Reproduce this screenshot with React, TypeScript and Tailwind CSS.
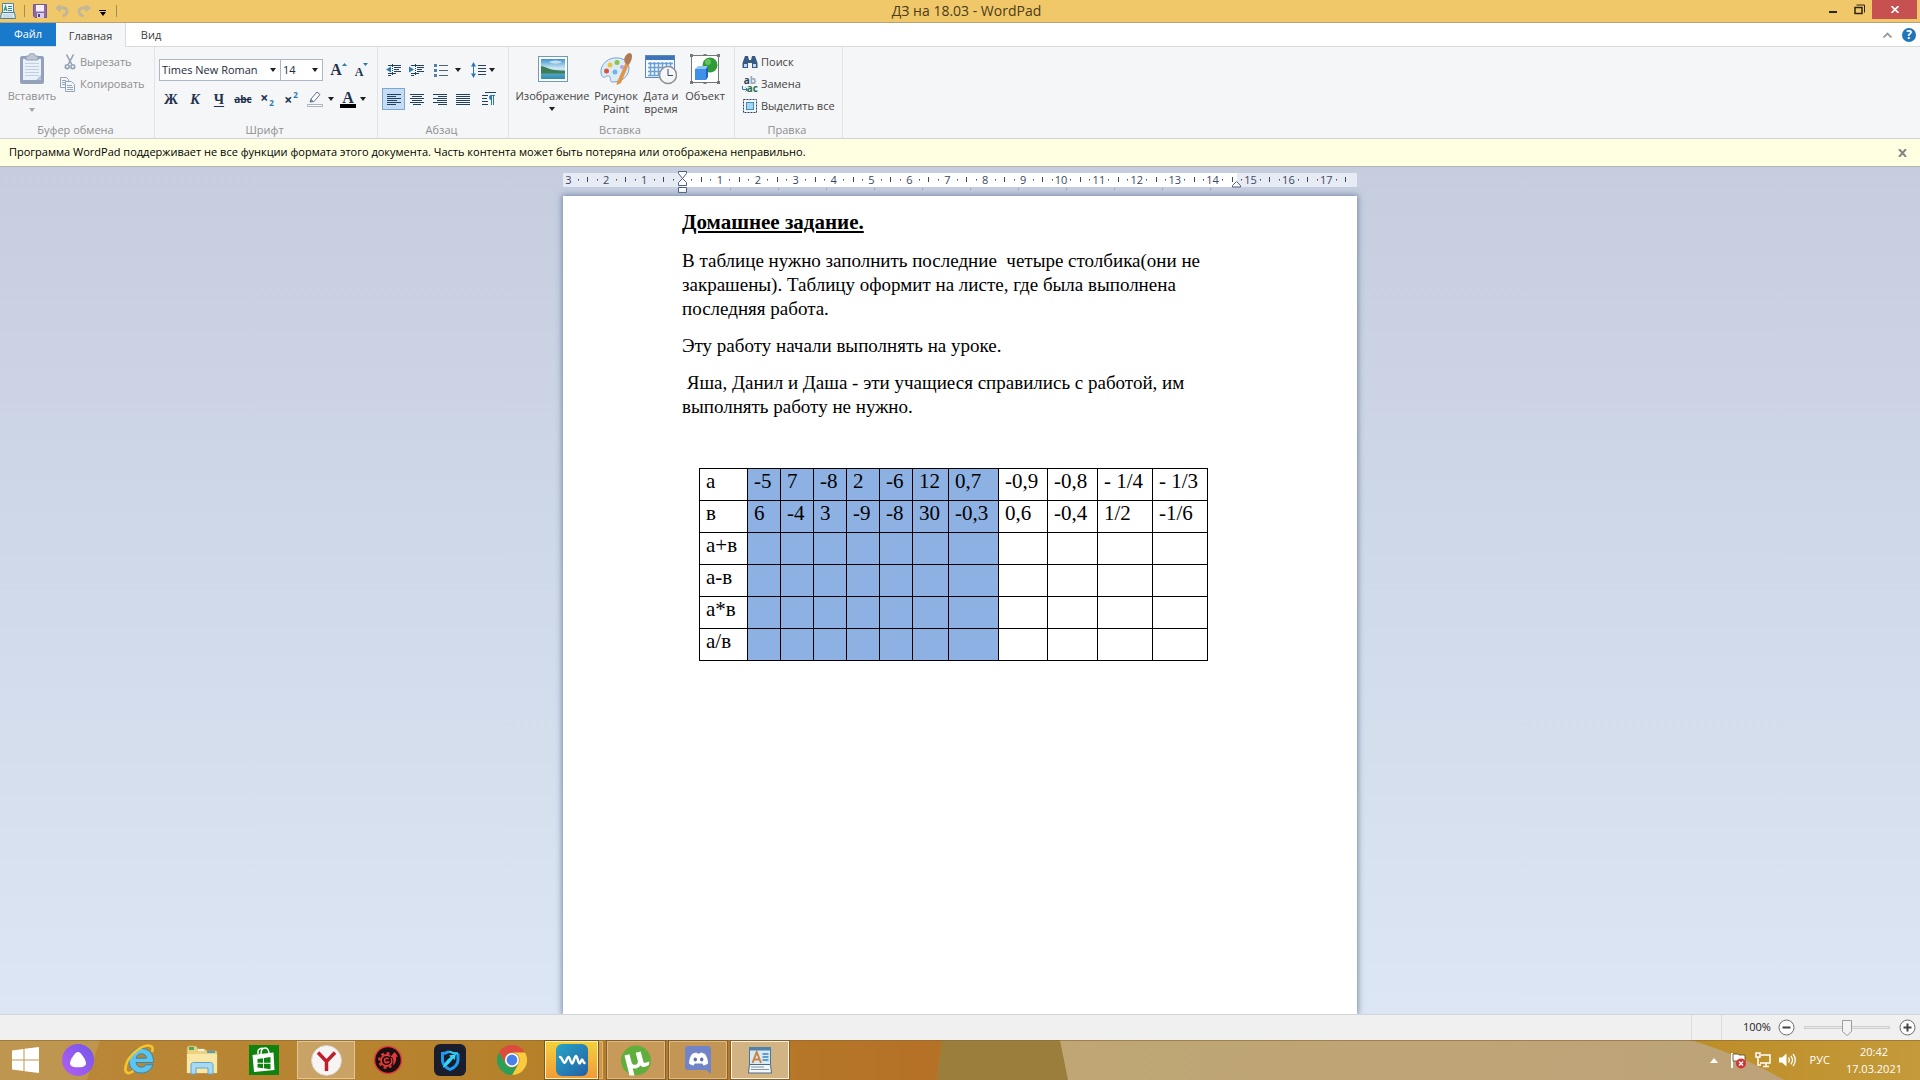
import React from "react";

type Kids = { children?: React.ReactNode };

const Down = ({ className = "" }: { className?: string }) => (
  <svg width="6" height="4" viewBox="0 0 6 4" className={className} aria-hidden="true">
    <path d="M0 0h6L3 4z" fill="currentColor" />
  </svg>
);

/* ---------- title bar ---------- */

const AppIcon = () => (
  <svg width="16" height="16" viewBox="0 0 16 16">
    <path d="M2.500.5h11v9h-11z" fill="#eef6fb" stroke="#4d86a3" />
    <path d="M1.500 9.500h13l1 6H.5z" fill="#dcebf4" stroke="#4d7f99" />
    <path d="M4 8l1.500-5L7 8M4.500 6.500h2" stroke="#3a9a68" strokeWidth="1.200" fill="none" />
    <path d="M8 3.500h4M8 5.500h4M8 7.500h4" stroke="#3f7cb8" />
    <path d="M3 12h10M3 14h10" stroke="#b6ccd9" />
  </svg>
);

const SaveIcon = () => (
  <svg width="14" height="14" viewBox="0 0 14 14">
    <path d="M.5.5h13v13H2l-1.500-1.500z" fill="#8a6aa8" stroke="#74588f" />
    <path d="M3 1h8v6.500H3z" fill="#f6eefa" />
    <path d="M4 9h7v5H4z" fill="#d9cde4" />
    <path d="M5 10h2v3H5z" fill="#5d3f83" />
  </svg>
);

const UndoIcon = ({ flip = false }: { flip?: boolean }) => (
  <svg width="14" height="14" viewBox="0 0 14 14" className={flip ? "-scale-x-100" : ""}>
    <path d="M3 4h5c2.500 0 4 1.200 4 3.200s-1.500 4-4.500 5" fill="none" stroke="#c3b698" strokeWidth="3" />
    <path d="M5.500 0v8.500L0 4z" fill="#c3b698" />
  </svg>
);

const TitleBar = () => (
  <header className="relative flex h-[23px] items-center justify-between border-b border-[#b5a27c] bg-[#f0c869]">
    <div className="flex h-full items-center gap-2">
      <AppIcon />
      <span className="h-3 w-px bg-[#a58c50]" />
      <button aria-label="Сохранить">
        <SaveIcon />
      </button>
      <button aria-label="Отменить">
        <UndoIcon />
      </button>
      <button aria-label="Вернуть">
        <UndoIcon flip />
      </button>
      <button aria-label="Настройка панели" className="mt-1 flex flex-col items-center gap-px">
        <span className="h-px w-[7px] bg-black" />
        <Down className="text-black" />
      </button>
      <span className="ml-[2px] h-3 w-px bg-[#a58c50]" />
    </div>
    <h1 className="absolute left-1/2 -translate-x-1/2 pl-[13px] text-[14px] leading-[22px] text-[#4b3c1c]">ДЗ на 18.03 - WordPad</h1>
    <div className="flex h-full items-start">
      <button aria-label="Свернуть" className="flex h-[19px] w-[26px] items-center justify-center">
        <svg width="8" height="12" viewBox="0 0 8 12">
          <path d="M0 7h8v2H0z" fill="#2d2410" />
        </svg>
      </button>
      <button aria-label="Восстановить" className="flex h-[18px] w-[26px] items-center justify-center">
        <svg width="11" height="11" viewBox="0 0 11 11" fill="none" stroke="#2d2410">
          <path d="M1 3.500h7v6H1z" strokeWidth="1.500" />
          <path d="M2.500 1h8v7.500" />
        </svg>
      </button>
      <button aria-label="Закрыть" className="mr-[3px] flex h-[19px] w-[45px] items-center justify-center bg-[#c75050]">
        <svg width="8" height="7" viewBox="0 0 8 7" stroke="#fff" strokeWidth="1.600">
          <path d="M.5 0l7 7M7.500 0l-7 7" />
        </svg>
      </button>
    </div>
  </header>
);

const Tabs = () => (
  <nav className="flex h-[24px] items-stretch border-b border-[#dadbdc] bg-white text-[11px] text-[#3c3c3c]">
    <button className="w-14 bg-[#1979ca] text-white">Файл</button>
    <button className="-mb-px w-[70px] border-r border-[#dadbdc] bg-[#f5f6f7] pt-[2px]">Главная</button>
    <button className="w-[50px] pt-[2px]">Вид</button>
    <div className="ml-auto flex items-center gap-2 pr-1">
      <button aria-label="Свернуть ленту" className="mr-[2px]">
        <svg width="9" height="6" viewBox="0 0 9 6" fill="none" stroke="#9a9a9a" strokeWidth="1.800">
          <path d="M.5 5.500l4-4 4 4" />
        </svg>
      </button>
      <button aria-label="Справка" className="flex h-[14px] w-[14px] items-center justify-center rounded-full bg-[#1f74ba] text-[12px] font-bold text-white">
        ?
      </button>
    </div>
  </nav>
);

/* ---------- ribbon ---------- */

const Group = ({ label, className, children }: Kids & { label: string; className: string }) => (
  <section className={`flex h-full flex-col border-r border-[#e2e3e4] ${className}`}>
    <div className="flex-1">{children}</div>
    <div className="pr-[3px] text-center leading-[17px] text-[#8e8f91]">{label}</div>
  </section>
);

const PasteIcon = () => (
  <svg width="26" height="32" viewBox="0 0 26 32">
    <rect x="1" y="3" width="24" height="28" rx="2" fill="#93a2b9" />
    <rect x="4" y="6" width="18" height="21" fill="#eaf0f8" />
    <path d="M6 10.500h14M6 13.500h14M6 16.500h14M6 19.500h14M6 22.500h14" stroke="#c2cfe2" />
    <path d="M22 27v-5l-5 5z" fill="#b8c5d8" />
    <path d="M7 3h3c0-2 1-3 3-3s3 1 3 3h3v4H7z" fill="#bcc7d5" stroke="#8593a9" strokeWidth=".8" />
  </svg>
);

const CutIcon = () => (
  <svg width="12" height="16" viewBox="0 0 12 16" fill="none" stroke="#92a2b6" strokeWidth="1.600">
    <path d="M2.500 0.500L7.800 10.500M9.500 .5L4.200 10.500" />
    <circle cx="3.200" cy="12.700" r="1.900" />
    <circle cx="8.800" cy="12.700" r="1.900" />
  </svg>
);

const CopyIcon = () => (
  <svg width="15" height="15" viewBox="0 0 15 15" fill="#f4f7fa" stroke="#94a5ba">
    <path d="M.5.5h6l2 2v8h-8z" />
    <path d="M2 3.500h4M2 5.500h3M2 7.500h3" />
    <path d="M5.500 4.500h6l3 3v7h-9z" />
    <path d="M7 8.500h5M7 10.500h6M7 12.500h6" />
  </svg>
);

const Clipboard = () => (
  <div className="flex gap-1 pl-2 pt-1 text-[#8e8f91]">
    <button className="mt-[2px] flex w-[48px] flex-col items-center">
      <PasteIcon />
      <span className="mt-[3px] leading-4">Вставить</span>
      <Down className="mt-1 text-[#a5a5a5]" />
    </button>
    <div className="flex flex-col">
      <button className="flex h-[22px] items-center">
        <span className="flex w-5 justify-center">
          <CutIcon />
        </span>
        Вырезать
      </button>
      <button className="flex h-[22px] items-center">
        <span className="flex w-5">
          <CopyIcon />
        </span>
        Копировать
      </button>
    </div>
  </div>
);

const Combo = ({ label, value, className }: { label: string; value: string; className: string }) => (
  <label className={`relative flex h-[22px] items-center border border-[#abb6c6] bg-white ${className}`}>
    <select aria-label={label} className="h-full w-full appearance-none bg-transparent pl-[2px] text-[11px] text-[#222b3c] outline-none" defaultValue={value}>
      <option>{value}</option>
    </select>
    <Down className="pointer-events-none absolute right-1 text-[#1e1e1e]" />
  </label>
);

const Tool = ({ label, className = "w-[23px]", children }: Kids & { label: string; className?: string }) => (
  <button aria-label={label} className={`flex h-[22px] shrink-0 items-center justify-center font-['Liberation_Serif',serif] text-[#1f3350] ${className}`}>
    {children}
  </button>
);

const FontGroup = () => (
  <div className="flex flex-col gap-[7px] pl-1 pt-[12px]">
    <div className="flex items-center">
      <Combo label="Шрифт" value="Times New Roman" className="w-[122px]" />
      <Combo label="Размер шрифта" value="14" className="-ml-px w-[43px]" />
      <Tool label="Увеличить шрифт" className="ml-1 w-[23px]">
        <span className="text-[16px] font-bold leading-4">A</span>
        <svg width="5" height="3" viewBox="0 0 5 3" className="-mt-3">
          <path d="M0 3L2.500 0 5 3z" fill="#2b7aa8" />
        </svg>
      </Tool>
      <Tool label="Уменьшить шрифт">
        <span className="mt-1 text-[12px] font-bold leading-4">A</span>
        <svg width="5" height="3" viewBox="0 0 5 3" className="-mt-3">
          <path d="M0 0h5L2.500 3z" fill="#2b7aa8" />
        </svg>
      </Tool>
    </div>
    <div className="flex items-center">
      <Tool label="Полужирный" className="w-6 text-[14px] font-bold">Ж</Tool>
      <Tool label="Курсив" className="w-6 text-[14px] font-bold italic">К</Tool>
      <Tool label="Подчеркнутый" className="w-6 text-[14px] font-bold underline underline-offset-2">Ч</Tool>
      <Tool label="Зачеркнутый" className="w-6 font-['Open_Sans',sans-serif] text-[10px] font-bold line-through">abc</Tool>
      <Tool label="Подстрочный знак" className="w-6 gap-px font-['Open_Sans',sans-serif] text-[14px] font-bold">
        <span className="-mt-[3px]">×</span>
        <span className="mt-2 text-[8px] text-[#2b7aa8]">2</span>
      </Tool>
      <Tool label="Надстрочный знак" className="w-6 gap-px font-['Open_Sans',sans-serif] text-[14px] font-bold">
        <span>×</span>
        <span className="-mt-2 text-[8px] text-[#2b7aa8]">2</span>
      </Tool>
      <button aria-label="Цвет выделения" className="ml-1 flex h-[22px] items-center gap-[3px] text-[#1e1e1e]">
        <svg width="18" height="17" viewBox="0 0 18 17">
          <path d="M3 11l1-3 6-7 3 2.500L7 10.500z" fill="#fff" stroke="#5d7089" />
          <path d="M3 11l1-3 3 2.500z" fill="#6d7f96" />
          <path d="M.5 13.500h15v2H.5z" fill="#fff" stroke="#a8b2c0" />
        </svg>
        <Down />
      </button>
      <button aria-label="Цвет текста" className="ml-[6px] flex h-[22px] items-center gap-1 text-[#1e1e1e]">
        <span className="flex w-4 flex-col items-center">
          <span className="font-['Liberation_Serif',serif] text-[16px] font-bold leading-[13px] text-[#1f3350]">A</span>
          <span className="h-1 w-4 bg-black" />
        </span>
        <Down />
      </button>
    </div>
  </div>
);

const Lines = ({ rows }: { rows: [number, number][] }) => (
  <svg width="14" height="13" viewBox="0 0 14 13" stroke="#23405f" strokeWidth="1">
    {rows.map(([a, b], i) => (
      <path key={i} d={`M${a} ${i * 2 + 1.5}H${b}`} />
    ))}
  </svg>
);

const IndentIcon = ({ out = false }: { out?: boolean }) => (
  <svg width="16" height="14" viewBox="0 0 16 14" fill="none">
    <path d="M6.500 1v12" stroke="#23405f" strokeDasharray="1 1" />
    <path d="M2 2.500h13M8 4.500h7M8 6.500h5M8 8.500h7M2 10.500h8M2 12.500h3" stroke="#23405f" />
    {out ? <path d="M5 3.500v6L0 6.500z" fill="#2b7ab5" /> : <path d="M0 3.500v6l5-3z" fill="#2b7ab5" />}
  </svg>
);

const full: [number, number][] = [[0, 14], [0, 14], [0, 14], [0, 14], [0, 14], [0, 14]];
const left: [number, number][] = [[0, 14], [0, 9], [0, 14], [0, 10], [0, 14], [0, 9]];
const center: [number, number][] = [[0, 14], [2, 12], [0, 14], [2, 12], [0, 14], [3, 11]];
const right: [number, number][] = [[0, 14], [5, 14], [0, 14], [4, 14], [0, 14], [5, 14]];

const ParagraphGroup = () => (
  <div className="flex flex-col gap-[7px] pl-1 pt-[12px]">
    <div className="flex items-center">
      <Tool label="Уменьшить отступ">
        <IndentIcon out />
      </Tool>
      <Tool label="Увеличить отступ">
        <IndentIcon />
      </Tool>
      <button aria-label="Маркеры" className="ml-[5px] flex h-[22px] items-center gap-[6px] text-[#1e1e1e]">
        <svg width="16" height="14" viewBox="0 0 16 14">
          <path d="M1 1h3v3H1zM1 6h3v3H1zM1 11h3v3H1z" fill="#4d83a6" />
          <path d="M6 2.500h9M6 7.500h9M6 12.500h9" stroke="#4f6378" />
        </svg>
        <Down />
      </button>
      <button aria-label="Междустрочный интервал" className="ml-[10px] flex h-[22px] items-center gap-[3px] text-[#1e1e1e]">
        <svg width="15" height="16" viewBox="0 0 15 16">
          <path d="M2.500 3v10" stroke="#2b7ab5" />
          <path d="M0 4.500h5L2.500 0zM0 11.500h5L2.500 16z" fill="#2b7ab5" />
          <path d="M7 3.500h8M7 6.500h8M7 9.500h8M7 12.500h8" stroke="#23405f" />
        </svg>
        <Down />
      </button>
    </div>
    <div className="flex items-center">
      <Tool label="По левому краю" className="w-[23px] border border-[#7fa6d0] bg-[#c5dcf5]">
        <Lines rows={left} />
      </Tool>
      <Tool label="По центру">
        <Lines rows={center} />
      </Tool>
      <Tool label="По правому краю">
        <Lines rows={right} />
      </Tool>
      <Tool label="По ширине">
        <Lines rows={full} />
      </Tool>
      <Tool label="Абзац" className="ml-[3px] w-[23px]">
        <svg width="14" height="14" viewBox="0 0 14 14">
          <path d="M3 .5h11M0 3.500h6M0 6.500h5M0 9.500h6M0 12.500h6" stroke="#23405f" />
          <path d="M8 3h5v1h-1v9h-1V4h-1v9H9V8C6.500 8 6.500 3 9 3z" fill="#2b7ab5" />
        </svg>
      </Tool>
    </div>
  </div>
);

const ImageIcon = () => (
  <svg width="30" height="28" viewBox="0 0 30 28">
    <defs>
      <linearGradient id="sky" x1="0" y1="0" x2="0" y2="1">
        <stop offset="0" stopColor="#3f93cf" />
        <stop offset=".5" stopColor="#d7eef7" />
        <stop offset=".6" stopColor="#6aaec4" />
        <stop offset="1" stopColor="#2e8fb4" />
      </linearGradient>
    </defs>
    <rect x=".5" y="1.500" width="29" height="25" fill="#fff" stroke="#6d9cb5" />
    <rect x="3" y="4" width="24" height="20" fill="url(#sky)" />
    <path d="M3 11c6 1 10 5 24 5v2.500H3z" fill="#3d7d55" />
    <path d="M11 7c4-2 9-2 13 0-4 2-8 2-13 0z" fill="#fff" opacity=".6" />
  </svg>
);

const PaintIcon = () => (
  <svg width="32" height="32" viewBox="0 0 32 32">
    <path d="M14 5C6 6 0 13 1 20c.5 3 2 5 4 4s4-2 5 0-1 5 3 5c8 0 16-5 16-14 0-7-7-11-15-10z" fill="#dcebf8" stroke="#7aa5cc" />
    <circle cx="10" cy="12" r="2.500" fill="#e8c445" />
    <circle cx="17" cy="9.500" r="2.500" fill="#8bc34a" />
    <circle cx="6.500" cy="18" r="2.500" fill="#d9543f" />
    <circle cx="15" cy="19" r="2.500" fill="#6fb6e8" />
    <circle cx="22" cy="14" r="2" fill="#b9a2d8" />
    <path d="M26 9l3 2-8 19-4 2c-1-1 0-3 .500-4z" fill="#e0964a" />
    <path d="M25 10c-2-4 0-8 4-10 2 0 3 1 3 3 0 3-1 6-3.500 9z" fill="#b07a55" />
  </svg>
);

const DateIcon = () => (
  <svg width="32" height="32" viewBox="0 0 32 32">
    <rect x=".5" y="2.500" width="29" height="22" fill="#f5faff" stroke="#5b89bd" />
    <path d="M1 3h28.500v4H1z" fill="#3f74b8" />
    <path d="M3 10.500h25M3 14.500h25M3 18.500h20M3 22.500h18M5.500 9v14M9.500 9v14M13.500 9v14M17.500 9v14M21.500 9v8M25.500 9v8" stroke="#6d9fd6" strokeWidth="1.500" />
    <circle cx="23" cy="22" r="8.500" fill="#f4f6f8" stroke="#8d9299" strokeWidth="1.500" />
    <path d="M23 16v6.500h5" fill="none" stroke="#3b4b5c" />
  </svg>
);

const ObjectIcon = () => (
  <svg width="30" height="30" viewBox="0 0 30 30">
    <rect x="1.500" y="1.500" width="27" height="27" fill="#fff" stroke="#777" strokeWidth="1" />
    <path d="M0 0h3v3H0zM27 0h3v3h-3zM0 27h3v3H0zM27 27h3v3h-3zM13.500 0h3v2h-3zM13.500 28h3v2h-3z" fill="#777" />
    <circle cx="20" cy="11" r="7.500" fill="#2f9a38" />
    <circle cx="18" cy="8" r="3" fill="#7fd06f" opacity=".7" />
    <path d="M5 15l3-3h10l-2 3z" fill="#8ec5fa" />
    <path d="M5 15h11v11H5z" fill="#3f90e8" />
    <path d="M16 15l2-3v11l-2 3z" fill="#1f63bd" />
  </svg>
);

const Big = ({ icon, className, children }: Kids & { icon: React.ReactNode; className: string }) => (
  <button className={`flex flex-col items-center text-[#444] ${className}`}>
    <span className="flex h-8 items-center">{icon}</span>
    <span className="mt-1 whitespace-nowrap leading-[13px]">{children}</span>
  </button>
);

const InsertGroup = () => (
  <div className="flex items-start pl-[5px] pt-[6px]">
    <Big icon={<ImageIcon />} className="w-[77px]">
      Изображение
      <Down className="mx-auto mt-[5px] text-[#1e1e1e]" />
    </Big>
    <Big icon={<PaintIcon />} className="w-[50px]">
      Рисунок
      <br />
      Paint
    </Big>
    <Big icon={<DateIcon />} className="w-[40px]">
      Дата и
      <br />
      время
    </Big>
    <Big icon={<ObjectIcon />} className="w-[48px]">
      Объект
    </Big>
  </div>
);

const EditGroup = () => (
  <div className="flex flex-col pl-[7px] pt-1 text-[#444]">
    <button className="flex h-[22px] items-center gap-[3px]">
      <svg width="16" height="14" viewBox="0 0 16 14" fill="#375a85">
        <path d="M3 1h3l1 4h2l1-4h3l2.500 7v5H10V8H6v5H.5V8z" />
        <path d="M2 9h3v3H2zM11 9h3v3h-3z" fill="#c4d6ea" />
      </svg>
      Поиск
    </button>
    <button className="flex h-[22px] items-center gap-[3px]">
      <span className="relative block h-4 w-4 text-[10px] font-bold leading-[8px]">
        <span className="block text-[#27415f]">
          a<span className="text-[#9aa5b2]">b</span>
        </span>
        <span className="block text-right text-[#24704c]">ac</span>
        <svg width="6" height="6" viewBox="0 0 6 6" className="absolute bottom-0 left-0" fill="none" stroke="#2b7ab5">
          <path d="M.5 0v3.500H5M3.500 1.500l2 2-2 2" />
        </svg>
      </span>
      Замена
    </button>
    <button className="flex h-[22px] items-center gap-[3px]">
      <svg width="16" height="15" viewBox="0 0 16 15">
        <rect x="1.500" y=".5" width="13" height="13" fill="none" stroke="#23405f" strokeDasharray="2 1" />
        <rect x="4.500" y="3.500" width="7" height="7" fill="#a6d7f2" stroke="#3c8fc2" />
      </svg>
      Выделить все
    </button>
  </div>
);

const Ribbon = () => (
  <div className="flex h-[92px] border-b border-[#d2d3d4] bg-[#f5f6f7] text-[11px]">
    <Group label="Буфер обмена" className="w-[155px]">
      <Clipboard />
    </Group>
    <Group label="Шрифт" className="w-[223px]">
      <FontGroup />
    </Group>
    <Group label="Абзац" className="w-[131px]">
      <ParagraphGroup />
    </Group>
    <Group label="Вставка" className="w-[226px]">
      <InsertGroup />
    </Group>
    <Group label="Правка" className="w-[108px]">
      <EditGroup />
    </Group>
  </div>
);

const Notice = () => (
  <div role="status" className="flex h-7 items-center justify-between border-b border-[#b2b5ae] bg-[#ffffe1] pl-[9px] pr-[13px] text-[11px] text-black">
    <p>Программа WordPad поддерживает не все функции формата этого документа. Часть контента может быть потеряна или отображена неправильно.</p>
    <button aria-label="Закрыть сообщение">
      <svg width="9" height="8" viewBox="0 0 9 8" stroke="#858585" strokeWidth="2">
        <path d="M1 0l7 8M8 0l-7 8" />
      </svg>
    </button>
  </div>
);

/* ---------- ruler and page ---------- */

const CM = 37.9;
const ORIGIN = 119;

const Ruler = () => {
  const marks: React.ReactNode[] = [];
  for (let q = -12; q <= 70; q++) {
    const x = ORIGIN + (q * CM) / 4;
    if (q === 0) continue;
    if (q % 4 === 0) {
      marks.push(
        <text key={q} x={x} y="11" textAnchor="middle" fontSize="11" fill="#3b4763">
          {Math.abs(q / 4)}
        </text>
      );
    } else if (q % 2 === 0) {
      marks.push(<path key={q} d={`M${Math.round(x) + 0.5} 4v5`} stroke="#3b4763" />);
    } else {
      marks.push(<path key={q} d={`M${Math.round(x) + 0.5} 6v1.500`} stroke="#3b4763" />);
    }
  }
  const stops = Array.from({ length: 11 }, (_, i) => ORIGIN + (i + 1) * 48);
  return (
    <svg width="794" height="23" viewBox="0 0 794 23" className="mt-[6px] block overflow-visible" aria-label="Линейка">
      <rect width="794" height="14" fill="#e6ebf4" />
      <rect x={ORIGIN} width="555" height="14" fill="#fff" />
      {marks}
      {stops.map((x) => (
        <path key={x} d={`M${x + 0.5} 15v2`} stroke="#98a3b8" />
      ))}
      <g fill="#fff" stroke="#4e5f80">
        <path d="M115.500-1.500h8v2l-4 5-4-5zM119.500 5.500l4 4v3h-8v-3z" />
        <path d="M115.500 14.500h8v5h-8z" />
        <path d="M669.500 12.500l4-4 4 4v1.500h-8z" />
      </g>
    </svg>
  );
};

const widths = ["w-12", "w-[33px]", "w-[33px]", "w-[33px]", "w-[33px]", "w-[33px]", "w-9", "w-[50px]", "w-[49px]", "w-[50px]", "w-[55px]", "w-[55px]"];
const rows = [
  ["а", "-5", "7", "-8", "2", "-6", "12", "0,7", "-0,9", "-0,8", "- 1/4", "- 1/3"],
  ["в", "6", "-4", "3", "-9", "-8", "30", "-0,3", "0,6", "-0,4", "1/2", "-1/6"],
  ["а+в"],
  ["а-в"],
  ["а*в"],
  ["а/в"],
];

const HomeworkTable = () => (
  <table className="ml-[17px] mt-[49px] w-[508px] table-fixed border-collapse text-[21px] leading-6">
    <colgroup>
      {widths.map((w, i) => (
        <col key={i} className={w} />
      ))}
    </colgroup>
    <tbody>
      {rows.map((row) => (
        <tr key={row[0]} className="h-8">
          {widths.map((_, i) => {
            const cls = `border border-black whitespace-nowrap p-0 pl-[6px] text-left align-top font-normal ${i > 0 && i < 8 ? "bg-[#8db1e2]" : ""}`;
            return i === 0 ? (
              <th key={i} scope="row" className={cls}>
                {row[i]}
              </th>
            ) : (
              <td key={i} className={cls}>
                {row[i] ?? ""}
              </td>
            );
          })}
        </tr>
      ))}
    </tbody>
  </table>
);

const Page = () => (
  <article className="w-[794px] flex-1 bg-white pl-[119px] pr-[119px] pt-[14px] font-['Liberation_Serif','Times_New_Roman',serif] text-[19px] leading-6 text-black shadow-[0_0_6px_1px_#7888a5]">
    <h2 className="text-[21px] font-bold underline decoration-2 underline-offset-2">Домашнее задание.</h2>
    <p className="mt-[15px] whitespace-pre">
      {"В таблице нужно заполнить последние  четыре столбика(они не"}
      <br />
      закрашены). Таблицу оформит на листе, где была выполнена
      <br />
      последняя работа.
    </p>
    <p className="mt-[13px]">Эту работу начали выполнять на уроке.</p>
    <p className="mt-[13px] whitespace-pre">
      {" Яша, Данил и Даша - эти учащиеся справились с работой, им"}
      <br />
      выполнять работу не нужно.
    </p>
    <HomeworkTable />
  </article>
);

/* ---------- status bar ---------- */

const ZoomButton = ({ plus = false }: { plus?: boolean }) => (
  <button aria-label={plus ? "Увеличить масштаб" : "Уменьшить масштаб"}>
    <svg width="17" height="17" viewBox="0 0 17 17" fill="#fdfdfd" stroke="#6d6d6d">
      <circle cx="8.500" cy="8.500" r="7.500" />
      <path d={plus ? "M4.500 8.500h8M8.500 4.500v8" : "M4.500 8.500h8"} stroke="#444" strokeWidth="2" />
    </svg>
  </button>
);

const StatusBar = () => (
  <footer className="flex h-[26px] items-stretch justify-end border-t border-[#d2d5d9] bg-[#f0f0f0] text-[11px] text-[#222]">
    <div className="w-[31px] border-l border-r border-[#dcdcdc]" />
    <div className="flex items-center pl-[21px] pr-1">
      <span className="w-[35px]">100%</span>
      <ZoomButton />
      <div className="relative mx-[9px] h-4 w-[86px]">
        <svg width="86" height="16" viewBox="0 0 86 16">
          <rect x=".5" y="6.500" width="85" height="2" fill="#e8e8e8" stroke="#cfcfcf" />
          <path d="M38.500.5h9v11l-4.500 4-4.500-4z" fill="#f3f3f3" stroke="#9c9c9c" />
        </svg>
        <input type="range" aria-label="Масштаб" min="10" max="190" defaultValue="100" className="absolute inset-0 w-full opacity-0" />
      </div>
      <ZoomButton plus />
    </div>
  </footer>
);

/* ---------- taskbar ---------- */

const Task = ({ label, className = "w-[58px]", children }: Kids & { label: string; className?: string }) => (
  <button aria-label={label} className={`flex h-full items-center justify-center ${className}`}>
    {children}
  </button>
);

const icons = {
  alice: (
    <svg width="32" height="32" viewBox="0 0 32 32">
      <defs>
        <linearGradient id="al" x1="1" y1="0" x2="0" y2="1">
          <stop offset="0" stopColor="#6f55ee" />
          <stop offset="1" stopColor="#b560f0" />
        </linearGradient>
      </defs>
      <circle cx="16" cy="16" r="16" fill="url(#al)" />
      <path d="M16 8c3 0 8 8 8 11.500 0 3-4 3.800-8 3.800s-8-.8-8-3.800C8 16 13 8 16 8z" fill="#fff" />
    </svg>
  ),
  ie: (
    <svg width="32" height="32" viewBox="0 0 32 32">
      <path d="M29.500 18.500H12c.3 3 2.500 4.700 5.300 4.700 2.200 0 3.700-.8 4.600-2.400h7c-1.600 5-5.900 8.200-11.600 8.200-7.200 0-12.300-5.200-12.300-12.300C5 9.500 10.200 4.500 17.300 4.500c7.500 0 12.500 5.500 12.200 14zM12 14.200h10.600c-.3-2.700-2.300-4.400-5.200-4.400-2.800 0-4.900 1.700-5.400 4.400z" fill="#5fc4ee" stroke="#2287b8" strokeWidth=".9" />
      <path d="M28 8c1-3 1-5.500-1.500-6C21-.5 9 7.500 3.500 17 1 22.500.5 28 3.500 29c1.800.5 4-.7 6-2" fill="none" stroke="#f6c52c" strokeWidth="2.600" />
    </svg>
  ),
  folder: (
    <svg width="32" height="30" viewBox="0 0 32 30">
      <path d="M1 4c0-2 1-3 2-3h7l2 3h7l2 2h10v22H1z" fill="#ecd27c" stroke="#c9a94e" strokeWidth=".8" />
      <path d="M3 2h5v3H3z" fill="#4aa86a" />
      <path d="M12 4h6v2h-6z" fill="#e7f3fa" />
      <path d="M21 6h8v2h-8z" fill="#4a9cd6" />
      <path d="M1 9h30v19H1z" fill="#f8e7a6" />
      <path d="M5 29v-9c0-1.500 1-2.500 2.500-2.500h17c1.500 0 2.500 1 2.500 2.500v9h-5v-6H10v6z" fill="#a9d9f2" stroke="#5aa5cf" />
    </svg>
  ),
  store: (
    <svg width="30" height="30" viewBox="0 0 30 30">
      <path d="M0 0h30v30H0z" fill="#0f8210" />
      <path d="M3.500 10l21-2.500 1 17.500L5 27z" fill="#fff" />
      <path d="M9 9V6c0-2 3-3 5-2.500M12 9c0-5 2-6 4-6s3.500 1 4 5" fill="none" stroke="#fff" strokeWidth="1.500" />
      <path d="M8.500 14l5.500-.8v4.500H8.500zM15 13l6.500-1v5.700H15zM8.500 18.700H14v4.500l-5.500-.6zM15 18.700h6.500v5.500l-6.500-.9z" fill="#0f8210" />
    </svg>
  ),
  yandex: (
    <svg width="31" height="31" viewBox="0 0 31 31">
      <circle cx="15.500" cy="15.500" r="15" fill="#f7f5f3" stroke="#d5cfc8" />
      <path d="M7 7.500l8.500 9 8.500-9M15.500 16v10" fill="none" stroke="#bf1e2d" strokeWidth="3.500" />
    </svg>
  ),
  gear: (
    <svg width="30" height="30" viewBox="0 0 30 30">
      <circle cx="15" cy="15" r="13.500" fill="#1a0f10" stroke="#e5393c" strokeWidth="1.500" />
      <circle cx="13.500" cy="15.500" r="5.500" fill="none" stroke="#e5393c" strokeWidth="1.800" />
      <circle cx="13.500" cy="15.500" r="7.300" fill="none" stroke="#e5393c" strokeWidth="2.200" strokeDasharray="2.900 2.830" />
      <path d="M15.500 14a2.300 2.300 0 1 0 0 3h-2" fill="none" stroke="#e5393c" strokeWidth="1.500" />
      <path d="M16.500 12.500l5-6 4.500 5.500h-2.500c.5 4-1 7.500-4.500 9.500 1.500-3.500 1-6.500 0-9z" fill="#e5393c" stroke="#1a0f10" strokeWidth=".9" />
    </svg>
  ),
  shield: (
    <svg width="32" height="32" viewBox="0 0 32 32">
      <rect width="32" height="32" rx="6" fill="#1a1e2c" />
      <path d="M15 7.500C12.500 9 10.500 9.500 8.500 9.500V16c0 4.500 3 7.500 7.500 9.500 5-2.200 8-5 8-9.500V9.500" fill="none" stroke="#1f9cf2" strokeWidth="3" />
      <path d="M15 7.500c3 1.500 6 2 9 2" fill="none" stroke="#2fc9f5" strokeWidth="2.500" />
      <path d="M9 24c1-5 3.500-8 7.500-11l-1.500-1.500L22 10l-1.500 6-1.500-1.500C17 18 14 21 9 24z" fill="#35d5f7" />
    </svg>
  ),
  chrome: (
    <svg width="30" height="30" viewBox="0 0 30 30">
      <path d="M2 7.500A15 15 0 0 1 28 7.500H15A7.500 7.500 0 0 0 8.500 18.700z" fill="#dd4b3e" />
      <path d="M28 7.500A15 15 0 0 1 15 30l6.500-11.200A7.500 7.500 0 0 0 15 7.500z" fill="#fcca3f" />
      <path d="M2 7.500A15 15 0 0 0 15 30l6.500-11.200a7.500 7.500 0 0 1-13 0z" fill="#2c9e56" />
      <circle cx="15" cy="15" r="7" fill="#fff" />
      <circle cx="15" cy="15" r="5.400" fill="#4a80ea" />
    </svg>
  ),
  vm: (
    <svg width="32" height="32" viewBox="0 0 32 32">
      <defs>
        <linearGradient id="vm" x1="0" y1="0" x2="1" y2="1">
          <stop offset="0" stopColor="#27a5c6" />
          <stop offset="1" stopColor="#2460a6" />
        </linearGradient>
      </defs>
      <rect width="32" height="32" rx="6" fill="url(#vm)" />
      <path d="M4 13c2 0 3 6 4.500 6s2.500-6 4-6 2 6.500 3.500 6.500S18.500 12 20 12s2 7.500 3.500 7.500 1.500-4 2.500-4 1 3 2.500 3.500" fill="none" stroke="#fff" strokeWidth="2.400" strokeLinecap="round" />
    </svg>
  ),
  utorrent: (
    <svg width="32" height="31" viewBox="0 0 32 31">
      <circle cx="16" cy="15.500" r="15" fill="#61ae3c" />
      <path d="M4.500 10.500l5-1.200 2 7.700c.6 2.300 2 3.200 4 2.700s2.700-2 2.200-4.200l-2-7.700 5-1.300 2.500 9.500c.5 1.700 1 2 2.200 1.800l4-1.300-.5 3.500c-3.500 2-7 3-8.500.2-1.500 2.600-5 4-7.700 3.200l1.800 7-5 .1z" fill="#fff" />
    </svg>
  ),
  discord: (
    <svg width="27" height="28" viewBox="0 0 27 28">
      <path d="M3 0h20c2 0 3 1 3 3v25l-5-4H3c-2 0-3-1-3-3V3c0-2 1-3 3-3z" fill="#7184c8" />
      <path d="M7 8c1.500-1 3-1.500 4.500-1.500l.5 1h3l.5-1C17 6.500 18.500 7 20 8c2 3 3 6 3 9.500-1.300 1.200-3 1.800-4.500 2l-1.300-2h-7.400l-1.300 2c-1.500-.2-3.200-.8-4.500-2C4 14 5 11 7 8z" fill="#fff" />
      <ellipse cx="10.300" cy="13.500" rx="1.700" ry="1.900" fill="#5f6fae" />
      <ellipse cx="16.700" cy="13.500" rx="1.700" ry="1.900" fill="#5f6fae" />
    </svg>
  ),
  wordpad: (
    <svg width="24" height="28" viewBox="0 0 24 28">
      <path d="M1.500 1.500h21v17h-21z" fill="#d5ebf8" stroke="#4a7394" />
      <path d="M1 1h22v3.500H1z" fill="#4f83ab" />
      <path d="M4.500 17l4.200-11L13 17M6 13.500h5.500" fill="none" stroke="#d0823c" strokeWidth="2" />
      <path d="M14.500 8h6M14.500 11h6M14.500 14h6" stroke="#3d84c4" strokeWidth="1.500" />
      <path d="M1.500 18.500h21l1 8.500H.5z" fill="#f3f6f9" stroke="#4a6d8c" />
      <path d="M3 21h13M3 23.500h18" stroke="#8394a5" />
    </svg>
  ),
};

const Wallpaper = () => (
  <svg className="absolute inset-0 h-full w-full" viewBox="0 0 1920 40" preserveAspectRatio="none" aria-hidden="true">
    <defs>
      <linearGradient id="wpA">
        <stop offset="0" stopColor="#b98839" />
        <stop offset=".55" stopColor="#b6812b" />
        <stop offset="1" stopColor="#b57126" />
      </linearGradient>
      <linearGradient id="wpB">
        <stop offset="0" stopColor="#bfa674" />
        <stop offset="1" stopColor="#bda27a" />
      </linearGradient>
      <linearGradient id="wpC">
        <stop offset="0" stopColor="#bd8d27" />
        <stop offset="1" stopColor="#c49a3a" />
      </linearGradient>
    </defs>
    <path d="M0 0h942l-5 40H0z" fill="url(#wpA)" />
    <path d="M0 0h100L87 40H0z" fill="#be964f" />
    <path d="M942 0h118l8 40H937z" fill="#9c7e3c" />
    <path d="M1060 0h860v40H1068z" fill="url(#wpB)" />
    <path d="M1690 0h230v40H1784C1760 26 1725 10 1690 0z" fill="url(#wpC)" />
    <path d="M0 .5h1920" stroke="#8a6a34" opacity=".6" />
  </svg>
);

const Taskbar = () => (
  <nav className="relative h-10 bg-[#b98636]">
    <Wallpaper />
    <div className="relative flex h-full items-center justify-between">
      <div className="flex h-full items-center gap-1 py-px">
        <button aria-label="Пуск" className="flex h-full w-[45px] items-center justify-end pr-[6px]">
          <svg width="27" height="26" viewBox="0 0 27 26" fill="#fff">
            <path d="M0 3.500l11.500-1.600v10.600H0zM12.500 1.800L27 0v12.500H12.500zM0 13.500h11.500v10.600L0 22.500zM12.500 13.500H27V26l-14.500-1.800z" />
          </svg>
        </button>
        <Task label="Алиса">{icons.alice}</Task>
        <Task label="Internet Explorer">{icons.ie}</Task>
        <Task label="Проводник">{icons.folder}</Task>
        <Task label="Магазин">{icons.store}</Task>
        <Task label="Яндекс Браузер" className="w-[58px] border border-[#e0c596] bg-[#c9a266]">{icons.yandex}</Task>
        <Task label="Игровой ускоритель">{icons.gear}</Task>
        <Task label="Защита">{icons.shield}</Task>
        <Task label="Chrome">{icons.chrome}</Task>
        <div className="flex h-full w-[58px]">
          <Task label="Voicemod" className="w-[53px] border border-[#fdf3c0] bg-linear-to-b from-[#f3d03a] to-[#f29a38] outline outline-[#7c561c]">{icons.vm}</Task>
          <span className="ml-px h-full w-[4px] border border-l-0 border-[#d9b777] bg-[#c99a50]" />
        </div>
        <Task label="uTorrent" className="w-[58px] border border-[#dcb980] bg-[#c79a59] outline outline-[#86602a]">{icons.utorrent}</Task>
        <Task label="Discord" className="w-[58px] border border-[#dcb980] bg-[#c49656] outline outline-[#86602a]">{icons.discord}</Task>
        <Task label="WordPad" className="w-[58px] border border-[#fbf3e2] bg-[#d1b384] outline outline-[#86602a]">{icons.wordpad}</Task>
      </div>
      <div className="flex items-center pr-[18px] text-[11px] text-white">
        <button aria-label="Скрытые значки">
          <svg width="8" height="5" viewBox="0 0 8 5">
            <path d="M0 5l4-5 4 5z" fill="#fff" />
          </svg>
        </button>
        <svg width="17" height="17" viewBox="0 0 17 17" className="ml-3">
          <path d="M2 1v15" stroke="#fff" strokeWidth="2" />
          <path d="M3 2h5l1 1h6v7H9L8 9H3z" fill="#fff" stroke="#5d431b" strokeWidth=".8" />
          <circle cx="11" cy="11.500" r="5" fill="#d2333a" />
          <path d="M9 9.500l4 4M13 9.500l-4 4" stroke="#fff" strokeWidth="1.500" />
        </svg>
        <svg width="16" height="16" viewBox="0 0 16 16" className="ml-2" fill="none" stroke="#fff" strokeWidth="1.500">
          <path d="M6 3h9v8H5M8 14.500h6M11 11v3" />
          <path d="M1 1h4v4H1zM3 5v8h3" />
        </svg>
        <svg width="17" height="14" viewBox="0 0 17 14" className="ml-2" fill="none" stroke="#fff" strokeWidth="1.300">
          <path d="M0 4.500h3L7.500.5v13L3 9.500H0z" fill="#fff" stroke="none" />
          <path d="M9.500 4.500c1 1.500 1 3.500 0 5M11.800 2.800c2 2.500 2 6 0 8.500M14 1c3 3.500 3 8.500 0 12" />
        </svg>
        <button className="ml-[14px]">РУС</button>
        <time className="ml-4 flex flex-col text-center leading-[17px]">
          <span>20:42</span>
          <span>17.03.2021</span>
        </time>
      </div>
    </div>
  </nav>
);

export default function App() {
  return (
    <div className="flex min-h-screen flex-col overflow-hidden font-['Open_Sans','Segoe_UI',sans-serif]">
      <TitleBar />
      <Tabs />
      <Ribbon />
      <Notice />
      <main className="flex flex-1 flex-col items-center overflow-hidden bg-linear-to-b from-[#c5cddf] to-[#dce6f4]">
        <Ruler />
        <Page />
      </main>
      <StatusBar />
      <Taskbar />
    </div>
  );
}
